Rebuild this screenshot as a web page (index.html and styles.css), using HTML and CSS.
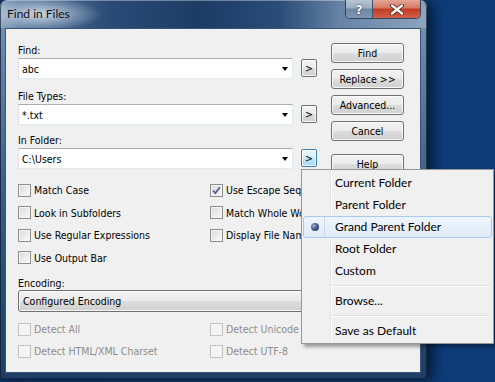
FILE: index.html
```html
<!DOCTYPE html>
<html lang="en">
<head>
<meta charset="UTF-8" />
<title>Find in Files</title>
<link rel="stylesheet" href="styles.css">
</head>
<body>
  <div class="window">
    <div class="titlebar">
      <span class="title">Find in Files</span>
      <div class="caption-btns">
        <span class="cap-btn cap-help">?</span>
        <span class="cap-btn cap-close">
          <svg width="14" height="11" viewBox="0 0 14 11">
            <path d="M2 1.5 L12 9.5 M12 1.5 L2 9.5" stroke="#4a1a14" stroke-width="4" stroke-linecap="round" />
            <path d="M2 1.5 L12 9.5 M12 1.5 L2 9.5" stroke="#fff" stroke-width="2.4" stroke-linecap="round" />
          </svg>
        </span>
      </div>
    </div>

    <div class="client">
      <div class="top">
        <div class="fields">
          <div class="field">
            <label class="lbl">Find:</label>
            <div class="field-row">
              <div class="combo"><span>abc</span><i class="arrow"></i></div>
              <button class="mini" type="button">&gt;</button>
            </div>
          </div>
          <div class="field">
            <label class="lbl">File Types:</label>
            <div class="field-row">
              <div class="combo"><span>*.txt</span><i class="arrow"></i></div>
              <button class="mini" type="button">&gt;</button>
            </div>
          </div>
          <div class="field field-folder">
            <label class="lbl">In Folder:</label>
            <div class="field-row">
              <div class="combo"><span>C:\Users</span><i class="arrow"></i></div>
              <button class="mini mini-hot" type="button">&gt;</button>
            </div>
          </div>
        </div>

        <div class="actions">
          <button class="btn" type="button">Find</button>
          <button class="btn" type="button">Replace &gt;&gt;</button>
          <button class="btn" type="button">Advanced...</button>
          <button class="btn" type="button">Cancel</button>
          <button class="btn btn-help" type="button">Help</button>
        </div>
      </div>

      <div class="checks">
        <label class="chk"><span class="cb"></span>Match Case</label>
        <label class="chk"><span class="cb cb-on"><svg width="9" height="9" viewBox="0 0 9 9"><path d="M1.2 4.6 L3.4 7.2 L7.8 1.2" fill="none" stroke="#4a5c92" stroke-width="1.7" /></svg></span>Use Escape Sequences</label>
        <label class="chk"><span class="cb"></span>Look in Subfolders</label>
        <label class="chk"><span class="cb"></span>Match Whole Word</label>
        <label class="chk"><span class="cb"></span>Use Regular Expressions</label>
        <label class="chk"><span class="cb"></span>Display File Names</label>
        <label class="chk"><span class="cb"></span>Use Output Bar</label>
      </div>

      <div class="encoding">
        <label class="lbl lbl-enc">Encoding:</label>
        <div class="droplist">Configured Encoding</div>
      </div>

      <div class="checks checks-off">
        <label class="chk"><span class="cb"></span>Detect All</label>
        <label class="chk"><span class="cb"></span>Detect Unicode</label>
        <label class="chk"><span class="cb"></span>Detect HTML/XML Charset</label>
        <label class="chk"><span class="cb"></span>Detect UTF-8</label>
      </div>
    </div>
  </div>

  <!-- popup menu of the In Folder button -->
  <div class="menu">
    <div class="menu-item">Current Folder</div>
    <div class="menu-item">Parent Folder</div>
    <div class="menu-item hot"><span class="bullet"></span>Grand Parent Folder</div>
    <div class="menu-item">Root Folder</div>
    <div class="menu-item">Custom</div>
    <div class="menu-sep"></div>
    <div class="menu-item">Browse...</div>
    <div class="menu-sep"></div>
    <div class="menu-item">Save as Default</div>
  </div>
</body>
</html>
```

FILE: styles.css
```css
*, *::before, *::after {
  box-sizing: border-box;
}
html, body {
  margin: 0;
  padding: 0;
}
body {
  width: 495px;
  height: 382px;
  overflow: hidden;
  position: relative;
  background: linear-gradient(90deg, #0a2f60 0, #0c3a74 30px, #0d3c77 100%);
  font-family: "DejaVu Sans Condensed", "DejaVu Sans", sans-serif;
  font-stretch: condensed;
  font-size: 10.5px;
  color: #000;
}

/* WINDOW FRAME */
.window {
  width: 427px;
  height: 379px;
  display: flex;
  flex-direction: column;
  padding: 0 6px 6px 5px;
  border-radius: 7px 7px 3px 3px;
  background: linear-gradient(180deg, #7f98b4 0, #6583a6 60px, #3e608a 180px, #26496f 300px, #1e3e66 100%);
  box-shadow: inset 0 0 0 1px rgba(15, 30, 55, 0.75), 6px 2px 12px rgba(0, 0, 0, 0.55);
}
.titlebar {
  height: 28px;
  margin: 0 -6px 0 -5px;
  padding: 0 6px 0 7px;
  display: flex;
  border-radius: 7px 7px 0 0;
  background:
    radial-gradient(ellipse 62px 17px at 40px 14px, rgba(220, 230, 242, 0.85), rgba(220, 230, 242, 0) 100%),
    linear-gradient(90deg, #8ea6bf 0, #5d7b9f 20px, #2a4b75 110px, #1c3c66 200px, #2a4c77 280px, #6783a5 340px, #8ea4bd 427px);
  box-shadow: inset 0 1px 0 rgba(255, 255, 255, 0.35), inset 1px 0 0 rgba(20, 35, 60, 0.7), inset -1px 0 0 rgba(20, 35, 60, 0.7);
}
.title {
  font-family: Lato, "Liberation Sans", sans-serif;
  font-stretch: normal;
  font-size: 12px;
  line-height: 28px;
  color: #111;
}
.caption-btns {
  margin-left: auto;
  display: flex;
  height: 19px;
  border: 1px solid #34465f;
  border-top: none;
  border-radius: 0 0 5px 5px;
  overflow: hidden;
}
.cap-btn {
  display: flex;
  align-items: center;
  justify-content: center;
  height: 18px;
}
.cap-help {
  width: 27px;
  border-right: 1px solid #3f536e;
  background: linear-gradient(180deg, #b7c5d4 0, #9aaec3 45%, #6d86a4 50%, #7f97b3 100%);
  color: #fff;
  font-family: "DejaVu Sans", sans-serif;
  font-stretch: normal;
  font-weight: bold;
  font-size: 13px;
  text-shadow: 0 0 2px #233550, 0 0 1px #233550;
}
.cap-close {
  width: 47px;
  background: linear-gradient(180deg, #e3a898 0, #d6775f 45%, #c23b22 50%, #d2604a 100%);
}

/* CLIENT AREA */
.client {
  flex: 1;
  background: #f0f0f0;
  border: 1px solid #3b5478;
  padding: 14px 0 0 12px;
}
.top {
  display: flex;
}
.fields {
  width: 299px;
}
.lbl {
  display: block;
  line-height: 14px;
  height: 14px;
}
.field-row {
  display: flex;
  align-items: flex-start;
  margin-top: 1px;
}
.field + .field {
  margin-top: 10px;
}
.field-folder.field {
  margin-top: 8px;
}
.combo {
  width: 275px;
  height: 21px;
  background: #fff;
  border: 1px solid;
  border-color: #abadb3 #e3e9ef #e3e9ef #e2e3ea;
  display: flex;
  align-items: center;
  padding-left: 3px;
  position: relative;
}
.arrow {
  position: absolute;
  right: 4px;
  top: 8px;
  width: 0;
  height: 0;
  border-left: 3.5px solid transparent;
  border-right: 3.5px solid transparent;
  border-top: 4px solid #000;
}
.mini {
  width: 16px;
  height: 18px;
  margin: 1px 0 0 8px;
  padding: 0;
  font: inherit;
  font-size: 10.5px;
  line-height: 14px;
  border: 1px solid #707070;
  border-radius: 2px;
  background: linear-gradient(180deg, #f2f2f2 0, #ebebeb 50%, #dddddd 50%, #cfcfcf 100%);
  box-shadow: inset 0 0 0 1px rgba(255, 255, 255, 0.8);
  color: #000;
}
.mini-hot {
  border-color: #3c7fb1;
  background: linear-gradient(180deg, #eaf6fd 0, #d9f0fc 50%, #bee6fd 50%, #a7d9f5 100%);
}
.actions {
  margin-left: 14px;
  display: flex;
  flex-direction: column;
  gap: 6px;
}
.btn {
  width: 73px;
  height: 20px;
  padding: 0;
  font: inherit;
  font-size: 10.5px;
  color: #000;
  border: 1px solid #707070;
  border-radius: 3px;
  background: linear-gradient(180deg, #f2f2f2 0, #ebebeb 50%, #dddddd 50%, #cfcfcf 100%);
  box-shadow: inset 0 0 0 1px rgba(255, 255, 255, 0.8);
}
.btn-help {
  margin-top: 7px;
}

/* CHECKBOXES */
.checks {
  display: grid;
  grid-template-columns: 192px 1fr;
  grid-auto-rows: 22.5px;
  margin-top: 5px;
}
.chk {
  display: flex;
  align-items: center;
  gap: 3px;
  white-space: nowrap;
}
.cb {
  width: 13px;
  height: 13px;
  flex: none;
  border: 1px solid #8e8f8f;
  background: linear-gradient(135deg, #d8d8d8 0, #ececec 55%, #fbfbfb 100%);
  box-shadow: inset 0 0 0 1px #f4f4f4;
  display: flex;
  align-items: center;
  justify-content: center;
}
.checks-off {
  grid-auto-rows: 22px;
  margin-top: 6px;
  color: #8d8d8d;
}
.checks-off .cb {
  border-color: #c4c4c4;
  background: #f4f4f4;
  box-shadow: none;
}

/* ENCODING */
.encoding {
  margin-top: 8px;
}
.lbl-enc {
  line-height: 13px;
  height: 13px;
}
.droplist {
  width: 400px;
  height: 22px;
  line-height: 20px;
  padding-left: 4px;
  border: 1px solid #707070;
  border-radius: 3px;
  background: linear-gradient(180deg, #f2f2f2 0, #ebebeb 50%, #dddddd 50%, #cfcfcf 100%);
  box-shadow: inset 0 0 0 1px rgba(255, 255, 255, 0.8);
}

/* POPUP MENU */
.menu {
  position: absolute;
  left: 301px;
  top: 169px;
  width: 193px;
  padding: 2px 1px 1px 1px;
  border: 1px solid #979797;
  background:
    linear-gradient(90deg, transparent 28px, #e2e3e3 28px, #e2e3e3 29px, #fff 29px, #fff 30px, transparent 30px),
    #f0f0f0;
  box-shadow: 3px 3px 3px rgba(0, 0, 0, 0.35);
  font-family: Lato, "Liberation Sans", sans-serif;
  font-stretch: normal;
  font-size: 12px;
}
.menu-item {
  height: 22px;
  line-height: 22px;
  padding-left: 32px;
  position: relative;
}
.menu-item.hot {
  line-height: 20px;
  padding-left: 31px;
  border: 1px solid #a9cbf1;
  border-radius: 3px;
  background: linear-gradient(180deg, #eef4fc 0, #e0ebf9 100%);
}
.menu-item.hot::after {
  content: "";
  position: absolute;
  left: 20px;
  top: 0;
  bottom: 0;
  width: 1px;
  background: #c6d8ef;
}
.bullet {
  position: absolute;
  left: 7px;
  top: 6px;
  width: 8px;
  height: 8px;
  border-radius: 50%;
  background: radial-gradient(circle at 35% 35%, #aab3d6 0, #4c5a8e 45%, #232d5c 100%);
}
.menu-sep {
  height: 8px;
  margin: 0 2px 0 28px;
  background: linear-gradient(180deg, transparent 3px, #e0e0e0 3px, #e0e0e0 4px, #fff 4px, #fff 5px, transparent 5px);
}
```
